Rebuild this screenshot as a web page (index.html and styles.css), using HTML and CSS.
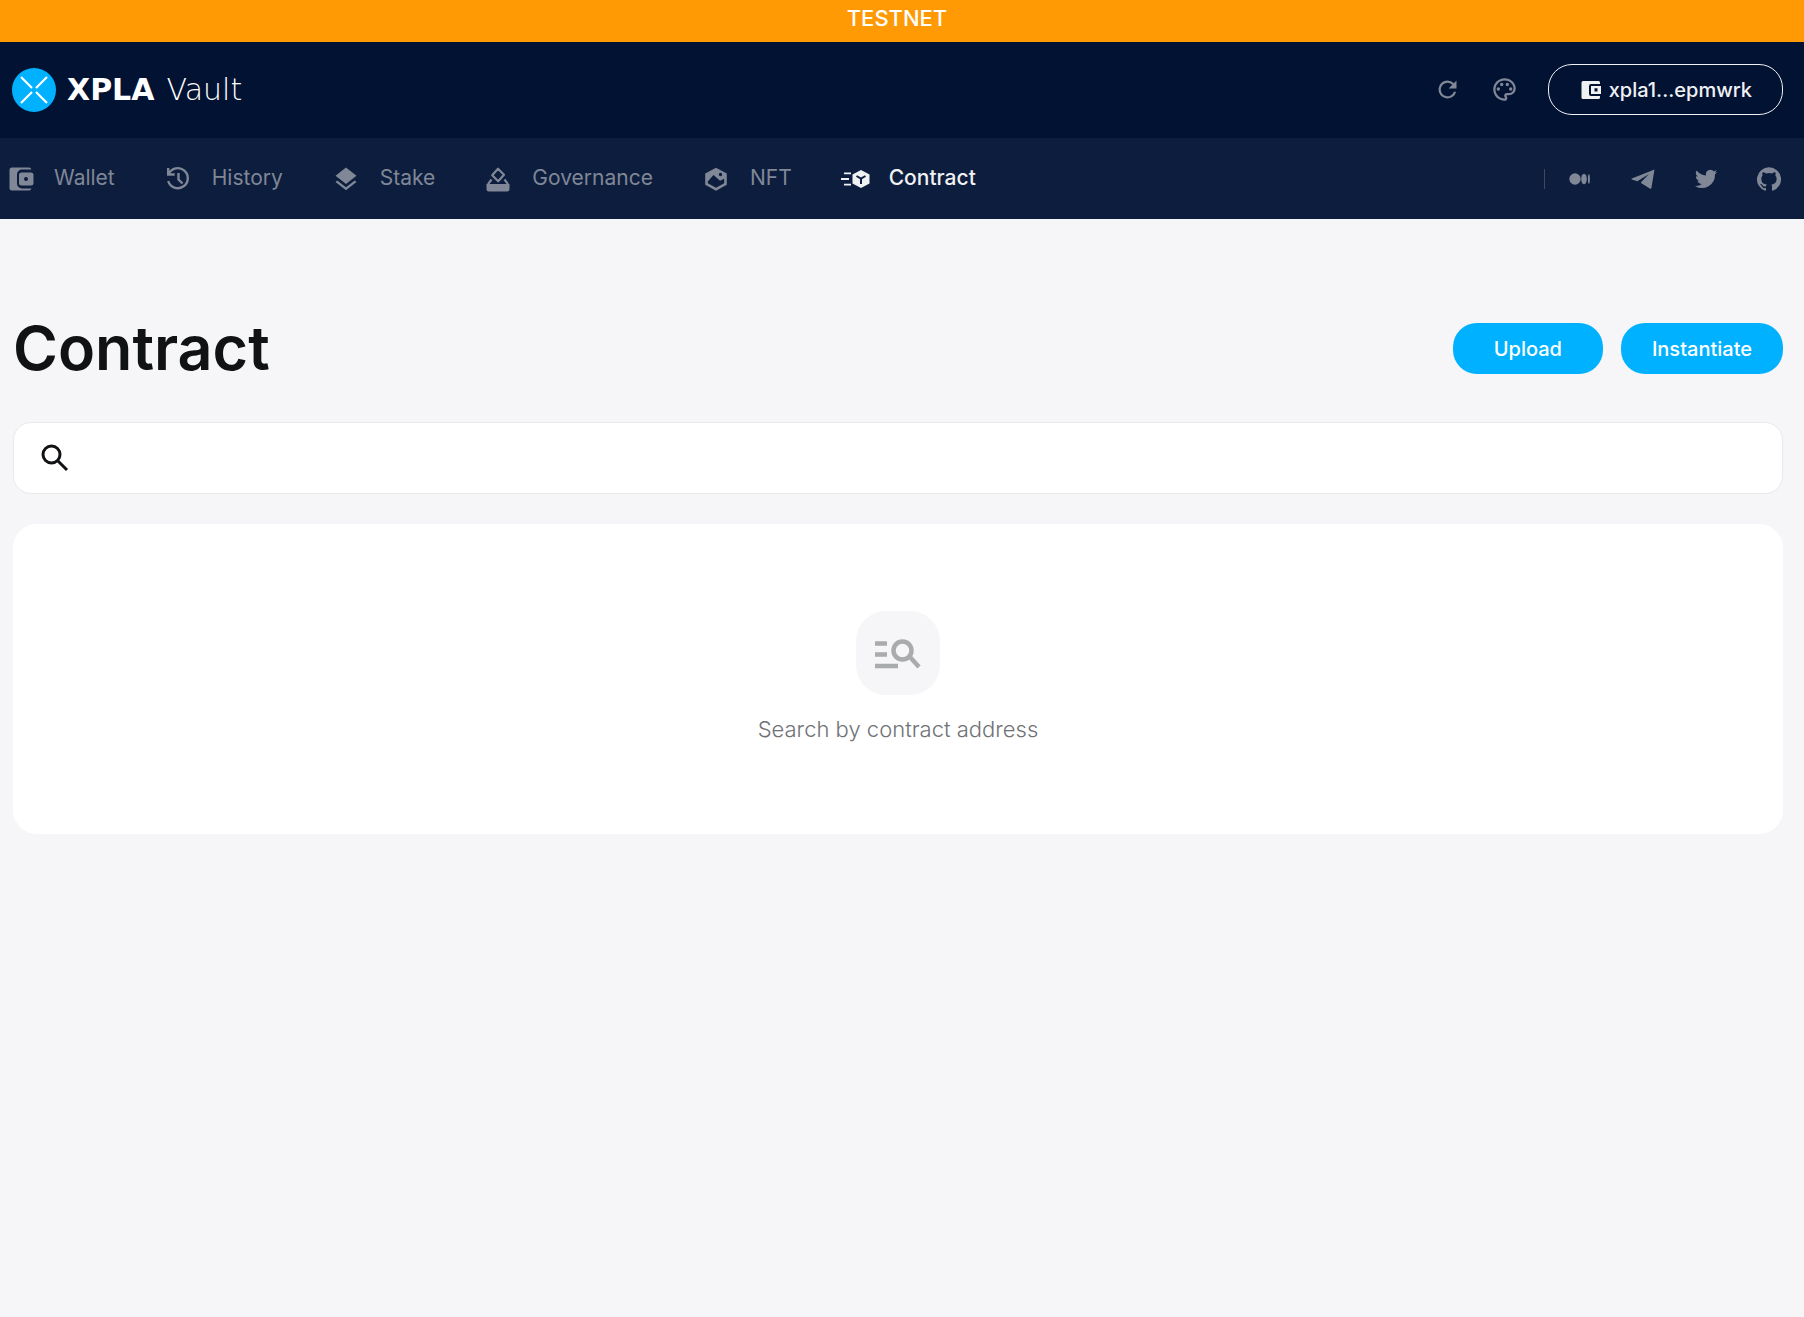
FILE: index.html
```html
<!DOCTYPE html>
<html lang="en">
<head>
<meta charset="utf-8">
<meta name="viewport" content="width=device-width, initial-scale=1">
<title>Contract | XPLA Vault</title>
<link rel="stylesheet" href="styles.css">
</head>
<body>
<div class="banner">TESTNET</div>
<header class="header">
  <a class="brand" href="#">
    <svg class="brand-mark" viewBox="0 0 44 44" aria-hidden="true"><circle cx="22" cy="22" r="22" fill="#00b1ff"/><path d="M9 9l11 11M35 9L24 20M9 35l11-11M35 35L24 24" stroke="#fff" stroke-width="2.2" fill="none"/></svg>
    <span class="brand-name"><span class="brand-bold">XPLA</span><span class="brand-light">Vault</span></span>
  </a>
  <div class="tools">
    <button class="tool" type="button" aria-label="Refresh"><svg class="tool-icon" viewBox="0 0 24 24"><path d="M17.65 6.35A7.96 7.96 0 0 0 12 4a8 8 0 1 0 7.73 10h-2.08A6 6 0 1 1 12 6c1.66 0 3.14.69 4.22 1.78L13 11h7V4z"/></svg></button>
    <button class="tool" type="button" aria-label="Theme"><svg class="tool-icon" viewBox="0 0 24 24"><path d="M12 22C6.49 22 2 17.51 2 12S6.49 2 12 2s10 4.04 10 9c0 3.31-2.69 6-6 6h-1.77c-.28 0-.5.22-.5.5 0 .12.05.23.13.33.41.47.64 1.06.64 1.67A2.5 2.5 0 0 1 12 22zm0-18c-4.41 0-8 3.59-8 8s3.59 8 8 8c.28 0 .5-.22.5-.5a.54.54 0 0 0-.14-.35c-.41-.46-.63-1.05-.63-1.65a2.5 2.5 0 0 1 2.5-2.5H16c2.21 0 4-1.79 4-4 0-3.86-3.59-7-8-7z"/><circle cx="6.5" cy="11.5" r="1.5"/><circle cx="9.5" cy="7.5" r="1.5"/><circle cx="14.5" cy="7.5" r="1.5"/><circle cx="17.5" cy="11.5" r="1.5"/></svg></button>
    <button class="account" type="button"><svg class="account-icon" viewBox="0 0 20 20" aria-hidden="true"><path fill-rule="evenodd" d="M2 1h15.500a1.500 1.500 0 0 1 1.500 1.500V4H10a2 2 0 0 0-2 2v8a2 2 0 0 0 2 2h9v1.500a1.500 1.500 0 0 1-1.500 1.500H2a1.500 1.500 0 0 1-1.500-1.500v-15A1.500 1.500 0 0 1 2 1zM10 6h10v8H10zM13.500 8.300v3.200h3V8.300z"/></svg>xpla1...epmwrk</button>
  </div>
</header>
<nav class="nav">
  <div class="menu">
    <a class="menu-item" href="#"><svg class="menu-icon" viewBox="0 0 28 28" aria-hidden="true"><path d="M7 2.500h16a2.500 2.500 0 0 1 2.400 2H16a5 5 0 0 0-5 5v9a5 5 0 0 0 5 5h9.400a2.500 2.500 0 0 1-2.400 2H6A2.500 2.500 0 0 1 3.500 23V5A2.500 2.500 0 0 1 6 2.500z"/><path fill-rule="evenodd" d="M15.500 7.500h9.500a2.500 2.500 0 0 1 2.500 2.500v8a2.500 2.500 0 0 1-2.500 2.500h-9.500A2.500 2.500 0 0 1 13 18v-8a2.500 2.500 0 0 1 2.500-2.500zM20 12a2 2 0 1 0 0 4 2 2 0 0 0 0-4z"/></svg><span class="menu-label">Wallet</span></a>
    <a class="menu-item" href="#"><svg class="menu-icon" viewBox="0 0 28 28" aria-hidden="true"><path d="M4.200 3v6.500h6.500M4.700 9A10 10 0 1 1 4.200 16M14.500 8v6.500l4 4" fill="none" stroke="currentColor" stroke-width="2.400"/></svg><span class="menu-label">History</span></a>
    <a class="menu-item" href="#"><svg class="menu-icon" viewBox="0 0 28 28" aria-hidden="true"><path d="M14 2.500l10.500 8.200L14 19 3.500 10.700zM14 22.300l8.700-6.800 1.800 1.400L14 25.200 3.500 16.900l1.800-1.400z"/></svg><span class="menu-label">Stake</span></a>
    <a class="menu-item" href="#"><svg class="menu-icon" viewBox="0 0 28 28" aria-hidden="true"><path d="M14 3.700l6 6-5.800 6.500-6-6zM7.500 14.500L4 19.200M20.500 14.500l3.500 4.700" fill="none" stroke="currentColor" stroke-width="2.200" stroke-linejoin="round"/><path d="M2.500 19h23v5a2.500 2.500 0 0 1-2.500 2.500H5A2.500 2.500 0 0 1 2.500 24z"/></svg><span class="menu-label">Governance</span></a>
    <a class="menu-item" href="#"><svg class="menu-icon" viewBox="0 0 28 28" aria-hidden="true"><path fill-rule="evenodd" d="M14 2.800l10.800 5.700v11.200L14 25.700 3.200 19.700V8.500zM5.800 16.500v1.700l8.200 4.600 8.200-4.600v-4.400l-4.200 2L11.500 10zM18.500 7.800a1.700 1.700 0 1 0 0 3.400 1.700 1.700 0 0 0 0-3.400z"/></svg><span class="menu-label">NFT</span></a>
    <a class="menu-item menu-item-active" href="#" aria-current="page"><svg class="menu-icon" viewBox="0 0 28 28" aria-hidden="true"><path d="M3 8.300h7M0 14h8M3 19.700h7" fill="none" stroke="currentColor" stroke-width="1.800"/><path d="M20 5l8.500 4.500v9L20 23l-8.500-4.500v-9z"/><path d="M15.500 11l4.500 2.600 4.500-2.600M20 13v6" fill="none" stroke="#0c1d3e" stroke-width="2"/></svg><span class="menu-label">Contract</span></a>
  </div>
  <div class="social">
    <a class="social-link" href="#" aria-label="Medium"><svg class="social-icon" viewBox="0 0 24 24"><circle cx="7" cy="12" r="5.700"/><ellipse cx="16" cy="12" rx="2.800" ry="5.300"/><ellipse cx="20.900" cy="12" rx="1" ry="4.800"/></svg></a>
    <a class="social-link" href="#" aria-label="Telegram"><svg class="social-icon" viewBox="0 0 24 24"><path d="M23.500 2.500L.800 11.500c-.5.300-.4.800 0 .900l5.600 1.800L18 7l-8 8.300v.700l8.800 5.600c.800.400 1.400.200 1.600-.700z"/></svg></a>
    <a class="social-link" href="#" aria-label="Twitter"><svg class="social-icon" viewBox="0 0 24 24"><path d="M23.300 4.900c-.8.400-1.700.6-2.600.7.900-.6 1.600-1.500 2-2.500-.9.500-1.900.9-2.900 1.100a4.600 4.600 0 0 0-7.800 4.200A13 13 0 0 1 2.600 3.600 4.600 4.600 0 0 0 4 9.700c-.7 0-1.400-.2-2.100-.6v.1a4.600 4.600 0 0 0 3.700 4.500c-.7.200-1.400.2-2.100.1a4.600 4.600 0 0 0 4.300 3.200A9.200 9.200 0 0 1 1 18.900 13 13 0 0 0 21 7.300c.9-.7 1.700-1.500 2.300-2.400z"/></svg></a>
    <a class="social-link" href="#" aria-label="GitHub"><svg class="social-icon" viewBox="0 0 24 24"><path d="M12 .3a12 12 0 0 0-3.800 23.400c.6.100.8-.3.800-.6v-2c-3.300.7-4-1.600-4-1.600-.6-1.400-1.400-1.800-1.400-1.800-1-.7.1-.7.100-.7 1.200 0 1.900 1.200 1.900 1.200 1 1.800 2.800 1.300 3.500 1 0-.8.400-1.300.7-1.600-2.700-.3-5.500-1.300-5.500-6 0-1.200.5-2.300 1.300-3.100-.2-.4-.6-1.600 0-3.200 0 0 1-.3 3.400 1.200a11.500 11.500 0 0 1 6 0c2.300-1.500 3.300-1.200 3.300-1.200.6 1.600.2 2.800 0 3.200.9.800 1.300 1.900 1.300 3.200 0 4.600-2.800 5.600-5.500 5.900.5.400.9 1 .9 2.200v3.300c0 .3.100.7.800.6A12 12 0 0 0 12 .3"/></svg></a>
  </div>
</nav>
<main class="main">
  <div class="title-row">
    <h1 class="title">Contract</h1>
    <div class="actions">
      <button class="button" type="button">Upload</button>
      <button class="button" type="button">Instantiate</button>
    </div>
  </div>
  <label class="search">
    <svg class="search-icon" viewBox="0 0 28 28" aria-hidden="true"><circle cx="10.500" cy="10.500" r="8.500"/><path d="M16.500 16.500l9.500 9.500"/></svg>
    <input class="search-input" type="text" aria-label="Contract address">
  </label>
  <section class="card">
    <div class="card-badge"><svg class="card-icon" viewBox="0 0 46 30" aria-hidden="true"><path d="M0 5.500h12M0 16.500h12M0 28h23M35 19l9 10" stroke="#aaabad" stroke-width="4.500"/><circle cx="27.500" cy="12.500" r="9" fill="none" stroke="#aaabad" stroke-width="4.500"/></svg></div>
    <p class="card-text">Search by contract address</p>
  </section>
</main>
</body>
</html>
```
FILE: styles.css
```css
* { box-sizing: border-box; }
body {
  margin: 0;
  min-height: 100vh;
  background: #f6f6f9;
  color: #111214;
  font-family: Inter, "Liberation Sans", sans-serif;
}
a { color: inherit; text-decoration: none; }
button { font: inherit; color: inherit; border: 0; cursor: pointer; }
svg { display: block; fill: currentColor; flex: none; overflow: visible; }

.banner {
  height: 42px;
  padding-right: 10px;
  background: #ff9a05;
  color: #fff;
  font-size: 22px;
  font-weight: 500;
  line-height: 36px;
  text-align: center;
}

.header {
  display: flex;
  align-items: center;
  justify-content: space-between;
  height: 96px;
  padding: 0 21px 0 12px;
  background: #021233;
  color: #f0f1f3;
}
.brand { display: flex; align-items: center; gap: 11px; color: #fff; }
.brand-mark { width: 44px; height: 44px; }
.brand-name {
  display: flex;
  gap: 12px;
  font-family: "DejaVu Sans", sans-serif;
  font-size: 30px;
  line-height: 44px;
}
.brand-bold { font-weight: 700; }
.brand-light { font-weight: 200; }

.tools { display: flex; align-items: center; padding-bottom: 2px; }
.tool { padding: 0; margin-right: 30px; background: none; color: #808796; }
.tool-icon { width: 27px; height: 27px; }
.account {
  display: flex;
  align-items: center;
  justify-content: center;
  gap: 8px;
  height: 51px;
  padding: 2px 30px 0 32px;
  border: 1px solid #f0f1f3;
  border-radius: 24px;
  background: none;
  font-size: 20px;
  font-weight: 500;
}
.account-icon { width: 20px; height: 20px; }

.nav {
  display: flex;
  align-items: center;
  justify-content: space-between;
  height: 81px;
  padding: 0 23px 0 6px;
  background: #0c1d3e;
  color: #808796;
}
.menu { display: flex; gap: 49px; }
.menu-item {
  display: flex;
  align-items: center;
  gap: 20px;
  font-size: 21px;
  line-height: 28px;
}
.menu-label { padding-bottom: 2px; }
.menu-item-active { color: #f0f1f3; font-weight: 500; }
.menu-icon { width: 28px; height: 28px; }
.social {
  display: flex;
  align-items: center;
  gap: 39px;
  height: 20px;
  padding-left: 23px;
  border-left: 1px solid #3d4963;
}
.social-icon { width: 24px; height: 24px; }

.main { padding: 84px 21px 0 13px; }
.title-row { display: flex; align-items: center; justify-content: space-between; height: 90px; }
.title { margin: 0; font-size: 61px; font-weight: 600; line-height: 90px; }
.actions { display: flex; gap: 18px; }
.button {
  min-width: 150px;
  height: 51px;
  padding: 2px 31px 0;
  border-radius: 24px;
  background: #00b1ff;
  color: #fff;
  font-size: 20px;
  font-weight: 500;
}

.search {
  display: flex;
  align-items: center;
  gap: 18px;
  height: 72px;
  margin-top: 29px;
  padding: 0 27px;
  border: 1px solid #e8e9eb;
  border-radius: 18px;
  background: #fff;
}
.search-icon { width: 28px; height: 28px; fill: none; stroke: #111214; stroke-width: 3; }
.search-input {
  flex: 1;
  min-width: 0;
  height: 100%;
  border: 0;
  outline: 0;
  background: none;
  font: inherit;
  font-size: 20px;
}

.card {
  display: flex;
  flex-direction: column;
  align-items: center;
  gap: 18px;
  margin-top: 30px;
  padding: 87px 24px 89px;
  border-radius: 24px;
  background: #fff;
}
.card-badge {
  display: flex;
  align-items: center;
  justify-content: center;
  width: 84px;
  height: 84px;
  border-radius: 30px;
  background: #f6f6f9;
}
.card-icon { width: 46px; height: 30px; }
.card-text { margin: 0; color: #707276; font-size: 22px; font-weight: 300; line-height: 32px; }
```
